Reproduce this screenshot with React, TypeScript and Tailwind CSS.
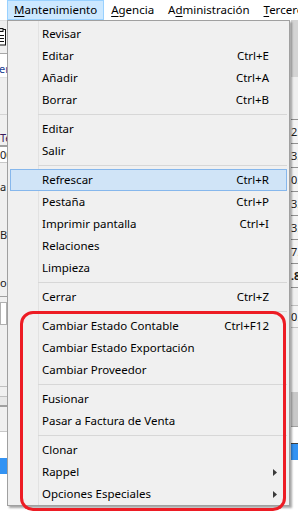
import React from "react";

type Entry =
  | { label: string; shortcut?: string; sub?: boolean; hl?: boolean }
  | "sep";

const entries: Entry[] = [
  { label: "Revisar" },
  { label: "Editar", shortcut: "Ctrl+E" },
  { label: "Añadir", shortcut: "Ctrl+A" },
  { label: "Borrar", shortcut: "Ctrl+B" },
  "sep",
  { label: "Editar" },
  { label: "Salir" },
  "sep",
  { label: "Refrescar", shortcut: "Ctrl+R", hl: true },
  { label: "Pestaña", shortcut: "Ctrl+P" },
  { label: "Imprimir pantalla", shortcut: "Ctrl+I" },
  { label: "Relaciones" },
  { label: "Limpieza" },
  "sep",
  { label: "Cerrar", shortcut: "Ctrl+Z" },
  "sep",
  { label: "Cambiar Estado Contable", shortcut: "Ctrl+F12" },
  { label: "Cambiar Estado Exportación" },
  { label: "Cambiar Proveedor" },
  "sep",
  { label: "Fusionar" },
  { label: "Pasar a Factura de Venta" },
  "sep",
  { label: "Clonar" },
  { label: "Rappel", sub: true },
  { label: "Opciones Especiales", sub: true },
];

function MenuBarItem({
  children,
  active,
}: {
  children: React.ReactNode;
  active?: boolean;
}) {
  return (
    <div
      className={
        active
          ? "flex items-center border border-[#99d1ff] bg-[#cce8ff] px-[6px]"
          : "flex items-center border border-transparent px-[6px]"
      }
    >
      {children}
    </div>
  );
}

function Popup() {
  return (
    <div className="absolute left-[7px] top-[20px] w-[283px] border border-[#a0a0a0] bg-[#f0f0f0] pt-[2px] shadow-[2px_2px_2px_rgba(0,0,0,0.35)]">
      <div className="absolute bottom-0 left-[30px] top-0 w-px bg-[#e2e2e2]" />
      {entries.map((e, i) =>
        e === "sep" ? (
          <div key={i} className="relative h-[7px] pt-[3px]">
            <div className="ml-[30px] mr-[2px] h-px bg-[#d7d7d7]" />
          </div>
        ) : (
          <div
            key={i}
            className={
              e.hl
                ? "relative mx-[2px] flex h-[22px] items-center justify-between border border-[#86b7ec] bg-[#d0e4f7] pl-[31px] pr-[17px]"
                : "relative mx-[2px] flex h-[22px] items-center justify-between border border-transparent pl-[31px] pr-[17px]"
            }
          >
            <span>{e.label}</span>
            {e.shortcut && <span>{e.shortcut}</span>}
            {e.sub && (
              <svg
                className="absolute right-[9px] top-[7px]"
                width="4"
                height="7"
                viewBox="0 0 4 7"
              >
                <path d="M0 0 L4 3.5 L0 7 Z" fill="#3a3a3a" />
              </svg>
            )}
          </div>
        )
      )}
    </div>
  );
}

function LeftStrip() {
  return (
    <div className="flex w-[7px] flex-col overflow-hidden text-[11px] text-[#202020]">
      <div className="flex h-[34px] items-center border-b border-t border-[#a8a8a8] border-t-[#dcdcdc] bg-[#f0f0f0]">
        <svg className="-ml-[6px] shrink-0" width="13" height="18" viewBox="0 0 13 18">
          <rect x="0.5" y="1.5" width="11" height="15.5" fill="#fff" stroke="#111" />
          <rect x="3" y="0.5" width="6" height="3" fill="#ddd" stroke="#111" />
          <line x1="3" y1="7.5" x2="10" y2="7.5" stroke="#111" />
          <line x1="3" y1="10.5" x2="10" y2="10.5" stroke="#111" />
          <line x1="3" y1="13.5" x2="10" y2="13.5" stroke="#111" />
        </svg>
      </div>
      <div className="flex h-[24px] items-end border-b border-[#e3e3e3] bg-white pb-[3px]">
        <span className="-ml-[1px] whitespace-nowrap text-[#1c3f94]">er.</span>
      </div>
      <div className="h-[37px] border-b border-[#d4d4d4] bg-[#f0f0f0]" />
      <div className="flex h-[32px] items-end border-b-2 border-[#a0a0a0] bg-[#f0f0f0] pb-[2px]">
        <span className="whitespace-nowrap text-[#3a1a5a]">Te</span>
      </div>
      <div className="flex h-[16px] items-center border-b border-[#c8c8c8] bg-white">
        <span className="whitespace-nowrap">00</span>
      </div>
      <div className="flex h-[37px] items-end bg-[#f0f0f0] pb-[8px]">
        <span className="whitespace-nowrap">a</span>
      </div>
      <div className="flex h-[50px] items-end bg-[#f0f0f0] pb-[10px]">
        <span className="whitespace-nowrap">B</span>
      </div>
      <div className="flex h-[47px] items-end border-b border-[#a0a0a0] bg-[#f0f0f0] pb-[8px]">
        <span className="whitespace-nowrap">oi</span>
      </div>
      <div className="h-[33px] bg-[#f0f0f0] py-[5px]">
        <div className="h-full border border-[#b0b0b0] bg-white" />
      </div>
      <div className="h-[57px] border-b border-[#c0c0c0] bg-[#f0f0f0]" />
      <div className="h-[10px] border-b border-[#c0c0c0] bg-[#f0f0f0]" />
      <div className="h-[10px] border-b-2 border-[#a0a0a0] bg-[#e8e8e8]" />
      <div className="h-[25px] border-b border-[#c8c8c8] bg-[#f0f0f0]" />
      <div className="h-[26px] bg-white" />
      <div className="h-[16px] bg-[#3393f3]" />
      <div className="flex-1 bg-white" />
    </div>
  );
}

const rightRows = ["2.", "3.", "0.", "3.", "3.", "7.", ".8"];

function RightStrip() {
  return (
    <div className="flex w-[7px] flex-col overflow-hidden text-[11px] text-[#202020]">
      <div className="h-[57px] bg-[#d4d4d4]" />
      <div className="h-[43px] border-b border-[#909090] bg-[#efefef]" />
      {rightRows.map((r, i) => (
        <div
          key={i}
          className={
            i === 6
              ? "flex h-[24px] items-center border-b border-[#909090] bg-[#f4f4f4] font-bold"
              : "flex h-[24px] items-center border-b border-[#909090] bg-[#f4f4f4]"
          }
        >
          <span className="whitespace-nowrap">{r}</span>
        </div>
      ))}
      <div className="h-[18px] border-b border-[#c0c0c0] bg-[#f0f0f0]" />
      <div className="flex h-[22px] items-center border-b border-[#c0c0c0] bg-[#f4f4f4]">
        <span className="whitespace-nowrap">0.</span>
      </div>
      <div className="h-[64px] bg-[#f0f0f0]" />
      <div className="h-[35px] border-b border-[#a0a0a0] bg-[#c8c8c8]" />
      <div className="h-[17px] border-b border-[#404040] bg-white" />
      <div className="h-[16px] bg-[#3393f3]" />
      <div className="flex-1 bg-white" />
    </div>
  );
}

export default function App() {
  return (
    <div className="relative h-[525px] w-[298px] overflow-hidden bg-white font-['Noto_Sans',sans-serif] text-[11.5px] leading-none text-black">
      <div className="flex h-[20px] items-stretch whitespace-nowrap bg-white pl-[7px]">
        <MenuBarItem active>
          <span>
            <span className="underline underline-offset-2">M</span>antenimiento
          </span>
        </MenuBarItem>
        <MenuBarItem>
          <span>
            <span className="underline underline-offset-2">A</span>gencia
          </span>
        </MenuBarItem>
        <MenuBarItem>
          <span>
            A<span className="underline underline-offset-2">d</span>ministración
          </span>
        </MenuBarItem>
        <MenuBarItem>
          <span>
            <span className="underline underline-offset-2">T</span>erceros
          </span>
        </MenuBarItem>
      </div>
      <div className="flex h-[505px] justify-between">
        <LeftStrip />
        <RightStrip />
      </div>
      <Popup />
      <div className="pointer-events-none absolute left-[20px] top-[311px] h-[200px] w-[266px] rounded-[13px] border-[3px] border-[#ed1c24]" />
    </div>
  );
}
